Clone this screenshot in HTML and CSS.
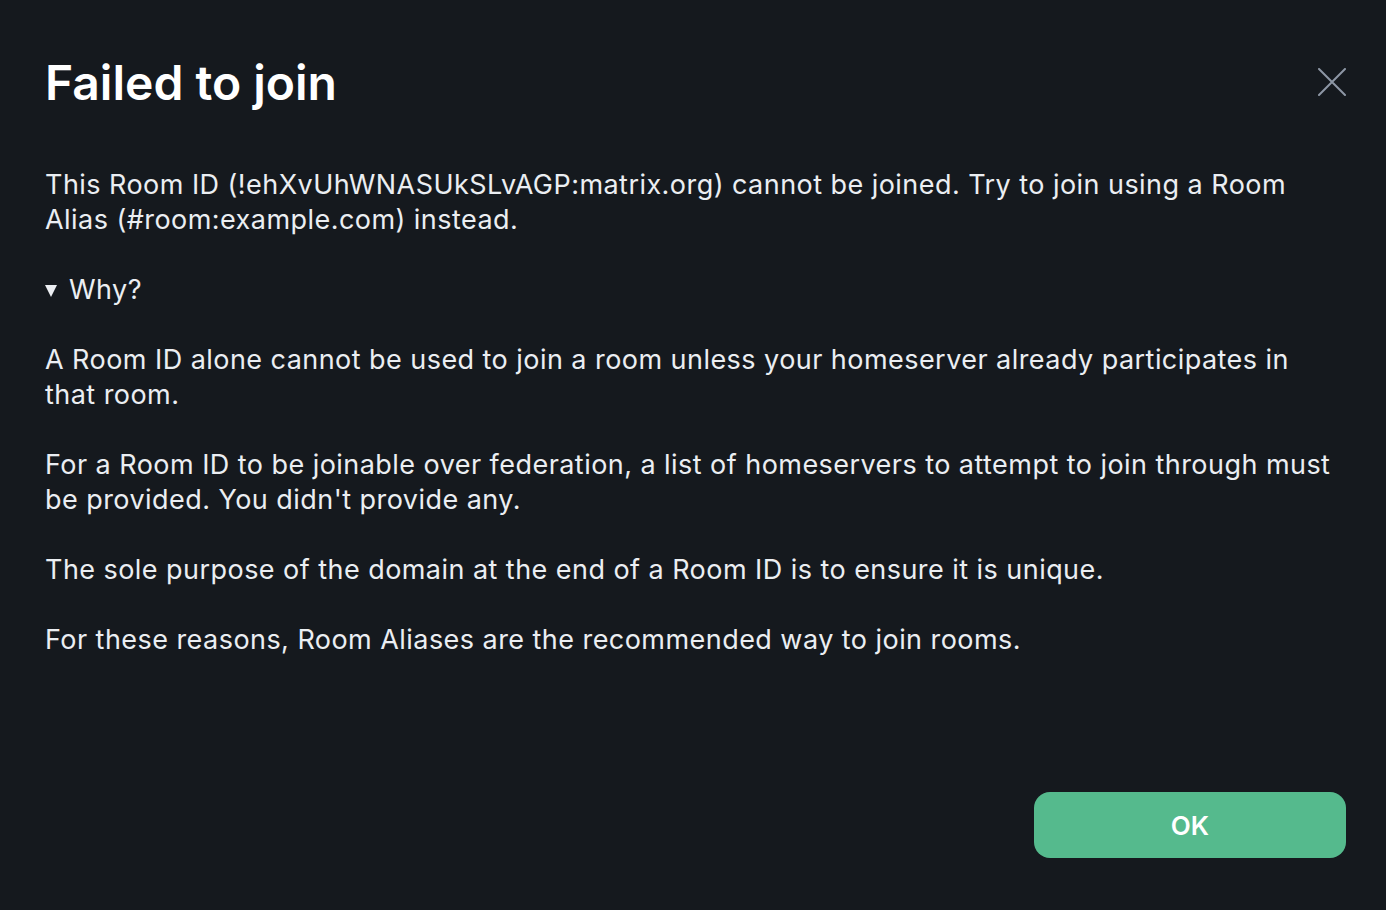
FILE: index.html
```html
<!DOCTYPE html>
<html lang="en">
<head>
<meta charset="utf-8">
<title>Failed to join</title>
<link rel="stylesheet" href="styles.css">
</head>
<body>
<div class="dialog">
  <header class="dialog-header">
    <h1 class="dialog-title">Failed to join</h1>
    <button class="close-btn" aria-label="Close">
      <svg width="28" height="28" viewBox="0 0 28 28" fill="none" stroke="currentColor" stroke-width="2" stroke-linecap="round"><path d="M1 1L27 27M27 1L1 27"/></svg>
    </button>
  </header>
  <div class="dialog-body">
    <p>This Room ID (!ehXvUhWNASUkSLvAGP:matrix.org) cannot be joined. Try to join using a Room Alias (#room:example.com) instead.</p>
    <details open class="why">
      <summary>Why?</summary>
      <p>A Room ID alone cannot be used to join a room unless your homeserver already participates in that room.</p>
      <p>For a Room ID to be joinable over federation, a list of homeservers to attempt to join through must be provided. You didn't provide any.</p>
      <p>The sole purpose of the domain at the end of a Room ID is to ensure it is unique.</p>
      <p>For these reasons, Room Aliases are the recommended way to join rooms.</p>
    </details>
  </div>
  <footer class="dialog-footer">
    <button class="ok-btn">OK</button>
  </footer>
</div>
</body>
</html>
```
FILE: styles.css
```css
html, body {
  margin: 0;
  height: 100%;
  background: #15191e;
}
body {
  font-family: Inter, "Noto Sans", sans-serif;
  color: #ebeef2;
}
.dialog {
  box-sizing: border-box;
  height: 100%;
  padding: 53px 40px 0 45px;
  display: flex;
  flex-direction: column;
}
.dialog-header {
  display: flex;
  justify-content: space-between;
  align-items: flex-start;
}
.dialog-title {
  margin: 0;
  font-size: 48px;
  font-weight: 600;
  line-height: 60px;
  color: #ffffff;
}
.close-btn {
  background: none;
  border: 0;
  padding: 0;
  margin-top: 15px;
  color: #8d97a5;
  width: 28px;
  height: 28px;
  cursor: pointer;
}
.close-btn svg { display: block; }
.dialog-body {
  margin-top: 54px;
  font-size: 27px;
  letter-spacing: 0.45px;
  line-height: 35px;
  padding-right: 5px;
}
.dialog-body p {
  margin: 0 0 35px 0;
}
.why summary {
  list-style: none;
  margin-bottom: 35px;
  cursor: pointer;
}
.why summary::-webkit-details-marker { display: none; }
.why summary::before {
  content: "";
  display: inline-block;
  width: 12px;
  height: 12px;
  margin-right: 12px;
  background: #ebeef2;
  clip-path: polygon(0 0, 100% 0, 50% 100%);
  vertical-align: 2px;
}
.dialog-footer {
  margin-top: auto;
  display: flex;
  justify-content: flex-end;
  padding-bottom: 52px;
}
.ok-btn {
  width: 312px;
  height: 66px;
  border: 0;
  border-radius: 16px;
  background: #55ba8d;
  color: #ffffff;
  font-family: Inter, "Noto Sans", sans-serif;
  font-size: 26px;
  font-weight: 600;
  cursor: pointer;
}
```
